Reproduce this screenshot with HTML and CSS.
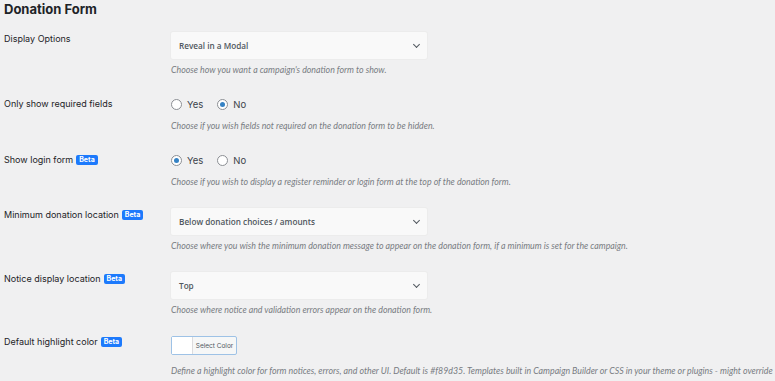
FILE: index.html
```html
<!DOCTYPE html>
<html lang="en">
<head>
  <meta charset="UTF-8">
  <meta name="viewport" content="width=device-width, initial-scale=1.0">
  <title>Donation Form Settings</title>
  <link rel="stylesheet" href="styles.css">
</head>
<body>
  <h2 class="section-title">Donation Form</h2>

  <div class="settings">
    <div class="row">
      <div class="label">Display Options</div>
      <div class="field">
        <div class="select">Reveal in a Modal<span class="chevron"></span></div>
        <p class="desc desc-select">Choose how you want a campaign's donation form to show.</p>
      </div>
    </div>

    <div class="row">
      <div class="label label-radio">Only show required fields</div>
      <div class="field">
        <div class="radios">
          <span class="radio"></span><span class="radio-text">Yes</span>
          <span class="radio checked"></span><span class="radio-text">No</span>
        </div>
        <p class="desc desc-radio">Choose if you wish fields not required on the donation form to be hidden.</p>
      </div>
    </div>

    <div class="row">
      <div class="label label-radio">Show login form <span class="badge">Beta</span></div>
      <div class="field">
        <div class="radios">
          <span class="radio checked"></span><span class="radio-text">Yes</span>
          <span class="radio"></span><span class="radio-text">No</span>
        </div>
        <p class="desc desc-radio">Choose if you wish to display a register reminder or login form at the top of the donation form.</p>
      </div>
    </div>

    <div class="row">
      <div class="label">Minimum donation location <span class="badge">Beta</span></div>
      <div class="field">
        <div class="select">Below donation choices / amounts<span class="chevron"></span></div>
        <p class="desc desc-select">Choose where you wish the minimum donation message to appear on the donation form, if a minimum is set for the campaign.</p>
      </div>
    </div>

    <div class="row">
      <div class="label">Notice display location <span class="badge">Beta</span></div>
      <div class="field">
        <div class="select">Top<span class="chevron"></span></div>
        <p class="desc desc-select">Choose where notice and validation errors appear on the donation form.</p>
      </div>
    </div>

    <div class="row">
      <div class="label label-color">Default highlight color <span class="badge">Beta</span></div>
      <div class="field">
        <div class="color-btn"><span class="swatch"></span><span class="color-text">Select Color</span></div>
        <p class="desc desc-color">Define a highlight color for form notices, errors, and other UI. Default is #f89d35. Templates built in Campaign Builder or CSS in your theme or plugins - might override this.</p>
      </div>
    </div>
  </div>
</body>
</html>
```

FILE: styles.css
```css
body {
  margin: 0;
  padding: 0 0 0 4px;
  background-color: #f0f0f1;
  color: #1d2327;
  font-family: Inter, "Liberation Sans", sans-serif;
  overflow: hidden;
}

.section-title {
  margin: 0 0 14px;
  font-size: 13px;
  line-height: 18px;
  font-weight: 700;
}

.row {
  display: grid;
  grid-template-columns: 167px 1fr;
  margin-bottom: 19px;
}

.label {
  font-size: 9px;
  line-height: 11px;
  padding-top: 1px;
  display: flex;
  align-items: center;
  gap: 3px;
  align-self: start;
}

.label-radio {
  padding-top: 2px;
}

.label-color {
  padding-top: 0;
}

.field {
  min-width: 0;
}

.select {
  position: relative;
  box-sizing: border-box;
  width: 256px;
  height: 27px;
  padding: 0 8px;
  background-color: #f9f9f9;
  border-radius: 2px;
  box-shadow: 0 0 0 1px #ececec;
  font-family: "Open Sans", sans-serif;
  font-size: 8.2px;
  font-weight: 600;
  color: #50575e;
  display: flex;
  align-items: center;
}

.chevron {
  position: absolute;
  right: 8px;
  top: 10px;
  width: 4px;
  height: 4px;
  border-right: 1.2px solid #50575e;
  border-bottom: 1.2px solid #50575e;
  transform: rotate(45deg);
}

.desc {
  margin: 0;
  font-family: Lato, sans-serif;
  font-style: italic;
  font-size: 8.8px;
  line-height: 14px;
  color: #787c82;
}

.desc-select {
  margin-top: 4px;
}

.desc-radio {
  margin-top: 7px;
}

.desc-color {
  margin-top: 9px;
}

.radios {
  height: 16px;
  display: flex;
  align-items: center;
}

.radio {
  box-sizing: border-box;
  width: 11px;
  height: 11px;
  border: 1px solid #8c8f94;
  border-radius: 50%;
  background-color: #fff;
  display: inline-flex;
  align-items: center;
  justify-content: center;
}

.radio.checked::after {
  content: "";
  width: 5px;
  height: 5px;
  border-radius: 50%;
  background-color: #3582c4;
}

.radio-text {
  margin-left: 5px;
  margin-right: 14px;
  font-size: 9.5px;
  color: #3c434a;
}

.badge {
  background-color: #1d7afc;
  color: #fff;
  font-size: 7px;
  font-weight: 700;
  line-height: 10px;
  padding: 0 3px;
  border-radius: 2px;
}

.color-btn {
  box-sizing: border-box;
  width: 66px;
  height: 19px;
  border: 1px solid #9ec2e6;
  border-radius: 2px;
  background-color: #f6f7f7;
  display: flex;
  align-items: stretch;
}

.swatch {
  width: 20px;
  background-color: #fff;
  border-right: 1px solid #dcdcde;
}

.color-text {
  flex: 1;
  font-size: 6.5px;
  color: #50575e;
  display: flex;
  align-items: center;
  justify-content: center;
}
```
